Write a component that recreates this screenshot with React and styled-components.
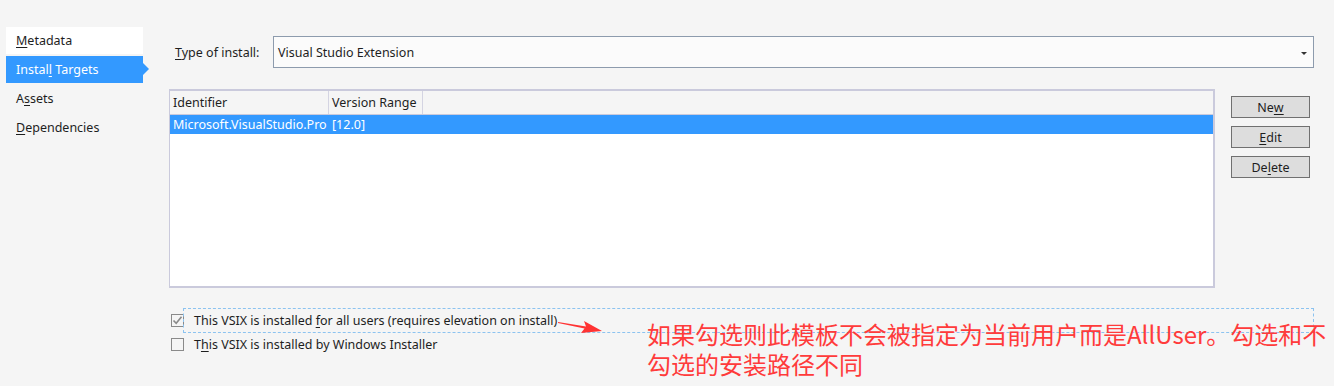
import React from 'react';
import styled, { createGlobalStyle } from 'styled-components';

const GlobalStyle = createGlobalStyle`
  html, body {
    margin: 0;
    padding: 0;
    background: #f5f5f5;
  }
  body {
    font-family: "Noto Sans", "Noto Sans CJK SC", sans-serif;
    font-size: 12.5px;
    color: #1e1e1e;
  }
`;

const Page = styled.div`
  position: relative;
  width: 1334px;
  height: 386px;
  display: flex;
  padding-left: 6px;
  box-sizing: border-box;
  overflow: hidden;
`;

const Sidebar = styled.div`
  width: 137px;
  padding-top: 27px;
  display: flex;
  flex-direction: column;
  gap: 2px;
`;

const NavItem = styled.div`
  position: relative;
  height: 27px;
  line-height: 27px;
  padding-left: 10px;
  background: ${(p) => (p.$active ? '#3399ff' : p.$first ? '#ffffff' : 'transparent')};
  color: ${(p) => (p.$active ? '#ffffff' : '#1e1e1e')};

  &::after {
    content: '';
    display: ${(p) => (p.$active ? 'block' : 'none')};
    position: absolute;
    right: -6px;
    top: 7px;
    border-top: 6px solid transparent;
    border-bottom: 6px solid transparent;
    border-left: 6px solid #3399ff;
  }
`;

const Main = styled.div`
  flex: 1;
  padding-left: 26px;
  padding-right: 20px;
  padding-top: 36px;
  display: flex;
  flex-direction: column;
`;

const TypeRow = styled.div`
  display: flex;
  align-items: center;
`;

const Label = styled.div`
  width: 98px;
  padding-left: 6px;
`;

const Combo = styled.div`
  flex: 1;
  height: 32px;
  box-sizing: border-box;
  border: 1px solid #8d9bad;
  background: #fbfbfb;
  display: flex;
  align-items: center;
  padding: 0 6px 0 4px;
`;

const ComboText = styled.div`
  flex: 1;
`;

const Caret = styled.div`
  width: 0;
  height: 0;
  border-left: 3px solid transparent;
  border-right: 3px solid transparent;
  border-top: 3px solid #333;
  margin-top: 2px;
`;

const TargetsRow = styled.div`
  display: flex;
  margin-top: 21px;
`;

const Grid = styled.div`
  width: 1046px;
  height: 199px;
  box-sizing: border-box;
  border: 2px solid #cacadc;
  border-left-width: 1px;
  background: #ffffff;
`;

const GridRow = styled.div`
  display: flex;
  height: ${(p) => (p.$header ? '23px' : '19px')};
  background: ${(p) => (p.$header ? '#f5f5f5' : p.$selected ? '#3399ff' : '#ffffff')};
  color: ${(p) => (p.$selected ? '#ffffff' : '#1e1e1e')};
  border-bottom: ${(p) => (p.$header ? '1px solid #cacadc' : 'none')};
`;

const Cell = styled.div`
  width: ${(p) => p.$w}px;
  box-sizing: border-box;
  padding-left: 3px;
  white-space: nowrap;
  overflow: hidden;
  display: flex;
  align-items: center;
  border-right: ${(p) => (p.$header ? '1px solid #d4d4e2' : 'none')};
`;

const Buttons = styled.div`
  display: flex;
  flex-direction: column;
  gap: 8px;
  margin-left: 16px;
  margin-top: 7px;
`;

const Button = styled.div`
  width: 79px;
  height: 22px;
  box-sizing: border-box;
  border: 1px solid #707070;
  background: #dddddd;
  display: flex;
  align-items: center;
  justify-content: center;
`;

const Options = styled.div`
  margin-top: 20px;
  display: flex;
  flex-direction: column;
`;

const Option = styled.div`
  display: flex;
  align-items: center;
  height: ${(p) => (p.$focus ? '25px' : '23px')};
  padding-left: 2px;
`;

const Box = styled.div`
  width: 13px;
  height: 13px;
  box-sizing: border-box;
  border: 1px solid #8a8a8a;
  background: #f5f5f5;
  margin-right: 9px;
  display: flex;
  align-items: center;
  justify-content: center;
`;

const OptionText = styled.div`
  padding: 3px 2px 4px 1px;
`;

const FocusRect = styled.div`
  position: absolute;
  left: 183px;
  top: 308px;
  width: 1131px;
  height: 25px;
  box-sizing: border-box;
  border: 1px dashed #8cc3f0;
  pointer-events: none;
`;

const Note = styled.div`
  position: absolute;
  left: 647px;
  top: 319px;
  width: 680px;
  font-family: "Noto Sans CJK SC", sans-serif;
  font-size: 24px;
  color: #ff3b3b;
`;

const NoteLine = styled.div`
  height: 30px;
  line-height: 30px;
  white-space: nowrap;
`;

const Arrow = styled.svg`
  position: absolute;
  left: 556px;
  top: 316px;
`;

const U = styled.span`
  text-decoration: underline;
  text-underline-offset: 2px;
`;

export default function App() {
  return (
    <>
      <GlobalStyle />
      <Page>
        <Sidebar>
          <NavItem $first><U>M</U>etadata</NavItem>
          <NavItem $active>Instal<U>l</U> Targets</NavItem>
          <NavItem>A<U>s</U>sets</NavItem>
          <NavItem><U>D</U>ependencies</NavItem>
        </Sidebar>
        <Main>
          <TypeRow>
            <Label><U>T</U>ype of install:</Label>
            <Combo>
              <ComboText>Visual Studio Extension</ComboText>
              <Caret />
            </Combo>
          </TypeRow>
          <TargetsRow>
            <Grid>
              <GridRow $header>
                <Cell $w={159} $header>Identifier</Cell>
                <Cell $w={94} $header>Version Range</Cell>
              </GridRow>
              <GridRow $selected>
                <Cell $w={159}>Microsoft.VisualStudio.Pro</Cell>
                <Cell $w={94}>[12.0]</Cell>
              </GridRow>
            </Grid>
            <Buttons>
              <Button>Ne<U>w</U></Button>
              <Button><U>E</U>dit</Button>
              <Button>De<U>l</U>ete</Button>
            </Buttons>
          </TargetsRow>
          <Options>
            <Option $focus>
              <Box>
                <svg width="11" height="11" viewBox="0 0 11 11">
                  <path d="M1.5 5.5 L4.2 8.3 L9.5 1.8" fill="none" stroke="#8a8a8a" strokeWidth="1.6" />
                </svg>
              </Box>
              <OptionText>This VSIX is installed <U>f</U>or all users (requires elevation on install)</OptionText>
            </Option>
            <Option>
              <Box />
              <OptionText>T<U>h</U>is VSIX is installed by Windows Installer</OptionText>
            </Option>
          </Options>
        </Main>
        <FocusRect />
        <Arrow width="50" height="22" viewBox="0 0 50 22">
          <path d="M2 6 L30 10.5 L28 5 L46 15 L25 17 L28.5 12.5 L2 7 Z" fill="#ff3333" />
        </Arrow>
        <Note>
          <NoteLine>如果勾选则此模板不会被指定为当前用户而是AllUser。勾选和不</NoteLine>
          <NoteLine>勾选的安装路径不同</NoteLine>
        </Note>
      </Page>
    </>
  );
}
